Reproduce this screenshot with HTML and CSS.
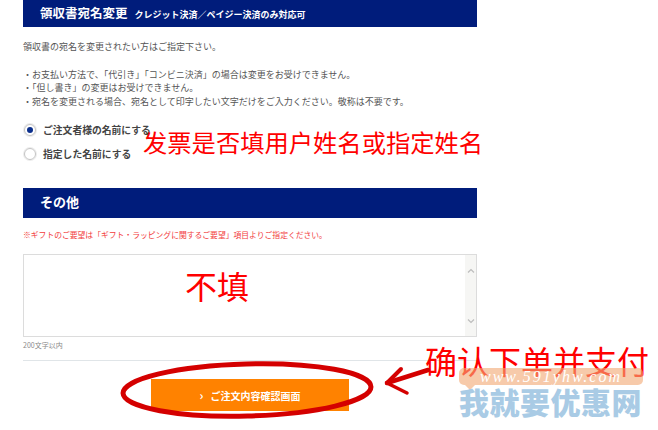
FILE: index.html
```html
<!DOCTYPE html>
<html lang="ja">
<head>
<meta charset="utf-8">
<link rel="stylesheet" href="styles.css">
</head>
<body>
<div class="page">
  <div class="form">
    <div class="bar">
      <span class="bar-title">領収書宛名変更</span>
      <span class="bar-sub">クレジット決済／ペイジー決済のみ対応可</span>
    </div>
    <p class="lead">領収書の宛名を変更されたい方はご指定下さい。</p>
    <ul class="notes">
      <li>・お支払い方法で、「代引き」「コンビニ決済」の場合は変更をお受けできません。</li>
      <li>・「但し書き」の変更はお受けできません。</li>
      <li>・宛名を変更される場合、宛名として印字したい文字だけをご入力ください。敬称は不要です。</li>
    </ul>
    <div class="radios">
      <div class="radio-row"><span class="radio checked"></span><span class="radio-label">ご注文者様の名前にする</span></div>
      <div class="radio-row"><span class="radio"></span><span class="radio-label">指定した名前にする</span></div>
    </div>

    <div class="bar bar-2">
      <span class="bar-title">その他</span>
    </div>
    <p class="warn">※ギフトのご要望は「ギフト・ラッピングに関するご要望」項目よりご指定ください。</p>
    <div class="textbox">
      <div class="text-area"></div>
      <div class="scroll">
        <svg width="8" height="5" viewBox="0 0 8 5"><path d="M1 4.5 L4 1.5 L7 4.5" fill="none" stroke="#bdbdbd" stroke-width="1.2"/></svg>
        <svg width="8" height="5" viewBox="0 0 8 5"><path d="M1 0.5 L4 3.5 L7 0.5" fill="none" stroke="#bdbdbd" stroke-width="1.2"/></svg>
      </div>
    </div>
    <p class="limit">200文字以内</p>
    <div class="divider"></div>
    <div class="btn-wrap">
      <div class="btn"><span class="chev">›</span>ご注文内容確認画面</div>
    </div>
  </div>

  <div class="ann ann-1" lang="zh-CN">发票是否填用户姓名或指定姓名</div>
  <div class="ann ann-2" lang="zh-CN">不填</div>
  <div class="ann ann-3" lang="zh-CN">确认下单并支付</div>

  <div class="wm-tag">www.591yhw.com</div>
  <div class="wm-name" lang="zh-CN">我就要优惠网</div>

  <svg class="marks" width="658" height="430" viewBox="0 0 658 430">
    <ellipse cx="247" cy="390" rx="124" ry="26" fill="none" stroke="#d40000" stroke-width="5" transform="rotate(-1.5 247 390)"/>
    <g stroke="#d40000" stroke-linecap="round" fill="none">
      <line x1="387" y1="383" x2="428" y2="370" stroke-width="4.5"/>
      <line x1="387" y1="383" x2="401" y2="369" stroke-width="4"/>
      <line x1="387" y1="383" x2="407" y2="393" stroke-width="3.5"/>
    </g>
  </svg>
</div>
</body>
</html>
```

FILE: styles.css
```css
* { box-sizing: border-box; }
html, body { margin: 0; padding: 0; background: #fff; }
body {
  font-family: "Noto Sans CJK JP", "Noto Sans", sans-serif;
  color: #555;
}
.page {
  position: relative;
  width: 658px;
  height: 430px;
  overflow: hidden;
}
.form {
  margin-left: 23px;
  width: 454px;
}
.bar {
  height: 27px;
  background: #001c7b;
  color: #fff;
  display: flex;
  align-items: baseline;
  padding-left: 17px;
  padding-top: 5px;
  gap: 7px;
}
.bar-title {
  font-size: 12.5px;
  font-weight: 700;
  line-height: 16px;
}
.bar-sub {
  font-size: 9px;
  font-weight: 700;
  line-height: 12px;
}
.lead {
  margin: 13px 0 0;
  font-size: 9px;
  line-height: 13.5px;
}
.notes {
  list-style: none;
  margin: 14px 0 0;
  padding: 0;
  font-size: 9px;
  line-height: 13.5px;
}
.radios {
  margin-top: 10px;
}
.radio-row {
  height: 24px;
  display: flex;
  align-items: center;
}
.radio {
  width: 12px;
  height: 12px;
  border-radius: 50%;
  border: 1px solid #c4c4c4;
  box-shadow: 0 0 0 1px #ececec;
  margin-left: 1px;
  display: flex;
  align-items: center;
  justify-content: center;
}
.radio.checked::after {
  content: "";
  width: 6px;
  height: 6px;
  border-radius: 50%;
  background: #0b2f8c;
}
.radio-label {
  margin-left: 7px;
  font-size: 9.8px;
  font-weight: 700;
  color: #444;
}
.bar-2 {
  margin-top: 22px;
  height: 30px;
  padding-top: 6px;
}
.bar-2 .bar-title { font-size: 13px; }
.warn {
  margin: 11px 0 0;
  font-size: 7.8px;
  line-height: 12px;
  color: #f23c3c;
}
.textbox {
  margin-top: 13px;
  height: 83px;
  border: 1px solid #dcdcdc;
  display: flex;
}
.text-area { flex: 1; }
.scroll {
  width: 11px;
  background: #f6f6f4;
  display: flex;
  flex-direction: column;
  justify-content: space-between;
  align-items: center;
  padding: 13px 0 12px;
}
.limit {
  margin: 3px 0 0;
  font-size: 7px;
  line-height: 10px;
  color: #8a8a8a;
}
.divider {
  margin-top: 10px;
  height: 1px;
  background: #e0e5e8;
}
.btn-wrap {
  margin-top: 18px;
  display: flex;
  justify-content: center;
}
.btn {
  width: 198px;
  height: 32px;
  background: #ff8200;
  color: #fff;
  font-size: 10px;
  font-weight: 700;
  display: flex;
  align-items: center;
  justify-content: center;
  gap: 7px;
}
.chev { font-size: 12px; line-height: 1; }

.ann {
  position: absolute;
  color: #ff0000;
  font-family: "Noto Sans CJK SC", sans-serif;
  font-weight: 400;
  line-height: 1;
  white-space: nowrap;
}
.ann-1 { left: 143px; top: 130px; font-size: 24.3px; }
.ann-2 { left: 185px; top: 269px; font-size: 32px; }
.ann-3 { left: 425px; top: 344px; font-size: 32px; }

.wm-tag {
  position: absolute;
  left: 459px;
  top: 368px;
  width: 184px;
  height: 17px;
  border-radius: 5px;
  background: rgba(242, 170, 118, 0.62);
  color: #fff;
  font-family: "Liberation Serif", serif;
  font-style: italic;
  font-size: 16px;
  line-height: 17px;
  letter-spacing: 2px;
  text-align: center;
}
.wm-tag::after {
  content: "";
  position: absolute;
  left: 6px;
  top: 17px;
  border-left: 5px solid transparent;
  border-right: 5px solid transparent;
  border-top: 5px solid rgba(242, 170, 118, 0.62);
}
.wm-name {
  position: absolute;
  left: 459px;
  top: 386px;
  font-family: "Noto Sans CJK SC", sans-serif;
  font-weight: 900;
  font-size: 30px;
  line-height: 1;
  letter-spacing: 0.5px;
  color: #a9cbe5;
  white-space: nowrap;
}
.marks {
  position: absolute;
  left: 0;
  top: 0;
  pointer-events: none;
}
```
